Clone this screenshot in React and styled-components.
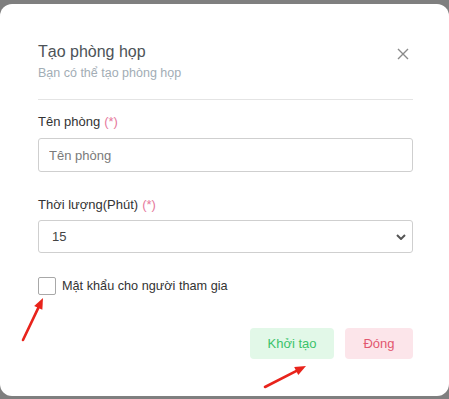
import React from "react";
import styled, { createGlobalStyle } from "styled-components";

const Global = createGlobalStyle`
  html, body { margin: 0; padding: 0; background: #7f7f7f; }
  body { font-family: "Liberation Sans", Arial, sans-serif; }
  * { box-sizing: border-box; }
`;

const Page = styled.div`
  width: 449px;
  height: 399px;
  padding-top: 4px;
  overflow: hidden;
  position: relative;
`;

const Modal = styled.div`
  position: relative;
  width: 449px;
  height: 392px;
  background: #fff;
  border-radius: 12px;
  padding: 38px 36px 0 38px;
  display: flex;
  flex-direction: column;
`;

const Header = styled.div`
  display: flex;
  justify-content: space-between;
  align-items: flex-start;
  padding-bottom: 18px;
  border-bottom: 1px solid #e4e4e4;
`;

const TitleBlock = styled.div`
  display: flex;
  flex-direction: column;
  gap: 3px;
`;

const Title = styled.div`
  font-size: 16px;
  line-height: 20px;
  color: #4d5358;
`;

const Subtitle = styled.div`
  font-size: 12.5px;
  line-height: 16px;
  color: #a2adb5;
`;

const CloseBtn = styled.button`
  border: 0;
  background: none;
  padding: 0;
  margin: 6px 4px 0 0;
  width: 12px;
  height: 12px;
  display: flex;
  cursor: pointer;
`;

const Field = styled.div`
  display: flex;
  flex-direction: column;
  gap: ${(p) => p.$gap}px;
  margin-top: ${(p) => p.$top}px;
`;

const Label = styled.label`
  font-size: 13px;
  line-height: 16px;
  color: #333;
`;

const Req = styled.span`
  color: #e6789c;
  margin-left: 4px;
`;

const Input = styled.input`
  width: 375px;
  height: 34px;
  border: 1px solid #cfcfcf;
  border-radius: 3px;
  padding: 0 10px;
  font-family: inherit;
  font-size: 13px;
  color: #333;
  outline: none;
  &::placeholder { color: #7a7a7a; }
`;

const SelectBox = styled.div`
  width: 375px;
  height: 33px;
  border: 1px solid #cfcfcf;
  border-radius: 3px;
  padding: 0 6px 0 13px;
  display: flex;
  align-items: center;
  justify-content: space-between;
  font-size: 13px;
  color: #444;
`;

const CheckRow = styled.label`
  display: flex;
  align-items: center;
  gap: 6px;
  margin-top: 24px;
  font-size: 12.7px;
  color: #333;
`;

const Box = styled.span`
  width: 18px;
  height: 18px;
  border: 1px solid #a8a8a8;
  border-radius: 2px;
  background: #fff;
`;

const Actions = styled.div`
  display: flex;
  justify-content: flex-end;
  gap: 11px;
  margin-top: 33px;
`;

const Btn = styled.button`
  height: 31px;
  width: ${(p) => p.$w}px;
  border: 0;
  border-radius: 4px;
  background: ${(p) => p.$bg};
  color: ${(p) => p.$fg};
  font-family: inherit;
  font-size: 13px;
  cursor: pointer;
`;

const Annotation = styled.svg`
  position: absolute;
  left: 0;
  top: 0;
  pointer-events: none;
`;

function Arrow({ x1, y1, x2, y2 }) {
  const dx = x2 - x1;
  const dy = y2 - y1;
  const len = Math.hypot(dx, dy);
  const ux = dx / len;
  const uy = dy / len;
  const hl = 11;
  const hw = 4.5;
  const bx = x2 - ux * hl;
  const by = y2 - uy * hl;
  const px = -uy * hw;
  const py = ux * hw;
  return (
    <g>
      <line x1={x1} y1={y1} x2={bx + ux * 2} y2={by + uy * 2} stroke="#e8231b" strokeWidth="2.6" strokeLinecap="round" />
      <polygon points={`${x2},${y2} ${bx + px},${by + py} ${bx - px},${by - py}`} fill="#e8231b" />
    </g>
  );
}

export default function App() {
  return (
    <>
      <Global />
      <Page>
        <Modal>
          <Header>
            <TitleBlock>
              <Title>Tạo phòng họp</Title>
              <Subtitle>Bạn có thể tạo phòng họp</Subtitle>
            </TitleBlock>
            <CloseBtn aria-label="close">
              <svg width="12" height="12" viewBox="0 0 12 12">
                <path d="M1 1L11 11M11 1L1 11" stroke="#8a8a8a" strokeWidth="1.4" />
              </svg>
            </CloseBtn>
          </Header>

          <Field $top={14} $gap={8}>
            <Label>
              Tên phòng<Req>(*)</Req>
            </Label>
            <Input placeholder="Tên phòng" />
          </Field>

          <Field $top={25} $gap={7}>
            <Label>
              Thời lượng(Phút)<Req>(*)</Req>
            </Label>
            <SelectBox>
              <span>15</span>
              <svg width="10" height="6" viewBox="0 0 10 6">
                <path d="M1 1L5 5L9 1" fill="none" stroke="#555" strokeWidth="2" />
              </svg>
            </SelectBox>
          </Field>

          <CheckRow>
            <Box />
            Mật khẩu cho người tham gia
          </CheckRow>

          <Actions>
            <Btn $w={84} $bg="#e2f8e8" $fg="#3bc36a">Khởi tạo</Btn>
            <Btn $w={68} $bg="#fce5ea" $fg="#e2576f">Đóng</Btn>
          </Actions>
        </Modal>
        <Annotation width="449" height="399" viewBox="0 0 449 399">
          <Arrow x1={23} y1={340} x2={43} y2={298} />
          <Arrow x1={265} y1={387} x2={306} y2={366} />
        </Annotation>
      </Page>
    </>
  );
}
